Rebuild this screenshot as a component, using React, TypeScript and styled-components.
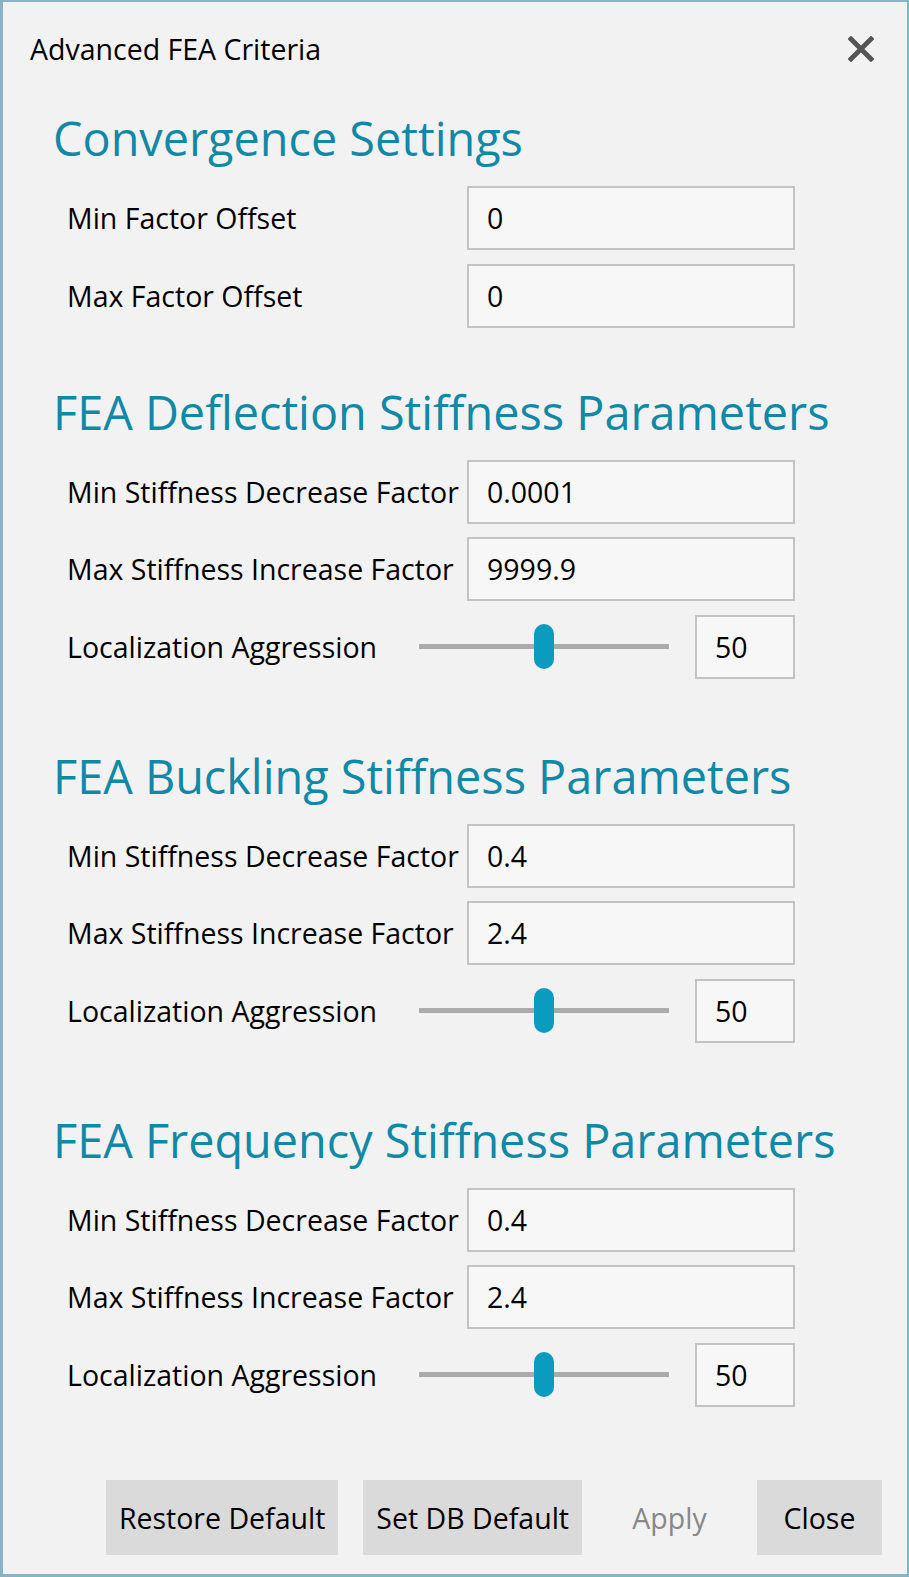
import React from "react";
import styled, { createGlobalStyle } from "styled-components";

const GlobalStyle = createGlobalStyle`
  html, body { margin: 0; padding: 0; }
  body {
    font-family: "Open Sans", "Noto Sans", "Liberation Sans", sans-serif;
    background: #f2f2f2;
    color: #000;
  }
  * { box-sizing: border-box; }
`;

const Window = styled.div`
  width: 909px;
  height: 1577px;
  border-style: solid;
  border-color: #86b4c4;
  border-width: 2px 2px 3px 3px;
  background: #f2f2f2;
  display: flex;
  flex-direction: column;
`;

const TitleBar = styled.div`
  height: 94px;
  display: flex;
  align-items: center;
  justify-content: space-between;
  padding: 0 33px 0 27px;
`;

const Title = styled.div`
  font-size: 28.5px;
  color: #000;
`;

const CloseButton = styled.button`
  border: none;
  background: transparent;
  padding: 0;
  width: 26px;
  height: 26px;
  display: flex;
  align-items: center;
  justify-content: center;
  cursor: pointer;
`;

const Content = styled.div`
  display: flex;
  flex-direction: column;
  padding-left: 50px;
`;

const Section = styled.section<{ $first?: boolean }>`
  display: flex;
  flex-direction: column;
  margin-top: ${(p) => (p.$first ? "19px" : "61px")};
`;

const Heading = styled.h2`
  margin: 0 0 24px 0;
  font-size: 46.8px;
  line-height: 47px;
  font-weight: 400;
  color: #1089a6;
  white-space: nowrap;
`;

const Rows = styled.div`
  display: flex;
  flex-direction: column;
  gap: 13.5px;
  margin-left: 14px;
  width: 728px;
`;

const Row = styled.div`
  display: grid;
  grid-template-columns: 400px 328px;
  align-items: center;
  height: 64px;
`;

const SliderRow = styled.div`
  display: grid;
  grid-template-columns: 352px 250px 100px;
  align-items: center;
  height: 64px;
  margin-bottom: 13px;
  & > :nth-child(3) {
    margin-left: 26px;
  }
`;

const Label = styled.div`
  font-size: 28.5px;
  color: #000;
  white-space: nowrap;
`;

const ValueBox = styled.input`
  height: 64px;
  width: 100%;
  border: 2px solid #c3c3c3;
  background: #f7f7f7;
  font-family: inherit;
  font-size: 28.5px;
  color: #000;
  padding: 0 18px;
  outline: none;
  margin: 0;
`;

const NumberBox = styled(ValueBox)`
  width: 100px;
`;

const SliderTrack = styled.div`
  position: relative;
  height: 45px;
  width: 250px;
  &::before {
    content: "";
    position: absolute;
    left: 0;
    right: 0;
    top: 20px;
    height: 5px;
    background: #ababab;
  }
`;

const Thumb = styled.div`
  position: absolute;
  top: 0;
  width: 20px;
  height: 45px;
  border-radius: 10px;
  background: #0a9bbe;
  transform: translateX(-50%);
`;

const Footer = styled.div`
  margin-top: auto;
  display: flex;
  justify-content: flex-end;
  gap: 25px;
  padding: 0 25px 19px 0;
`;

const Button = styled.button<{ $disabled?: boolean }>`
  height: 75px;
  min-width: 125px;
  padding: 0 13px;
  border: none;
  background: ${(p) => (p.$disabled ? "transparent" : "#dadada")};
  color: ${(p) => (p.$disabled ? "#888888" : "#000")};
  font-family: inherit;
  font-size: 28.5px;
  white-space: nowrap;
  cursor: ${(p) => (p.$disabled ? "default" : "pointer")};
`;

type Field = { label: string; value: string };
type SectionData = { title: string; fields: Field[]; slider?: number };

const sections: SectionData[] = [
  {
    title: "Convergence Settings",
    fields: [
      { label: "Min Factor Offset", value: "0" },
      { label: "Max Factor Offset", value: "0" },
    ],
  },
  {
    title: "FEA Deflection Stiffness Parameters",
    fields: [
      { label: "Min Stiffness Decrease Factor", value: "0.0001" },
      { label: "Max Stiffness Increase Factor", value: "9999.9" },
    ],
    slider: 50,
  },
  {
    title: "FEA Buckling Stiffness Parameters",
    fields: [
      { label: "Min Stiffness Decrease Factor", value: "0.4" },
      { label: "Max Stiffness Increase Factor", value: "2.4" },
    ],
    slider: 50,
  },
  {
    title: "FEA Frequency Stiffness Parameters",
    fields: [
      { label: "Min Stiffness Decrease Factor", value: "0.4" },
      { label: "Max Stiffness Increase Factor", value: "2.4" },
    ],
    slider: 50,
  },
];

const CloseIcon = () => (
  <svg width="26" height="26" viewBox="0 0 26 26">
    <path d="M3 3 L23 23 M23 3 L3 23" stroke="#555" strokeWidth="4.8" strokeLinecap="square" fill="none" />
  </svg>
);

export default function App() {
  return (
    <>
      <GlobalStyle />
      <Window>
        <TitleBar>
          <Title>Advanced FEA Criteria</Title>
          <CloseButton aria-label="Close">
            <CloseIcon />
          </CloseButton>
        </TitleBar>
        <Content>
          {sections.map((s, i) => (
            <Section key={s.title} $first={i === 0}>
              <Heading>{s.title}</Heading>
              <Rows>
                {s.fields.map((f) => (
                  <Row key={f.label}>
                    <Label>{f.label}</Label>
                    <ValueBox readOnly defaultValue={f.value} />
                  </Row>
                ))}
                {s.slider !== undefined && (
                  <SliderRow>
                    <Label>Localization Aggression</Label>
                    <SliderTrack>
                      <Thumb style={{ left: `${s.slider}%` }} />
                    </SliderTrack>
                    <NumberBox readOnly defaultValue={String(s.slider)} />
                  </SliderRow>
                )}
              </Rows>
            </Section>
          ))}
        </Content>
        <Footer>
          <Button>Restore Default</Button>
          <Button>Set DB Default</Button>
          <Button $disabled>Apply</Button>
          <Button>Close</Button>
        </Footer>
      </Window>
    </>
  );
}
